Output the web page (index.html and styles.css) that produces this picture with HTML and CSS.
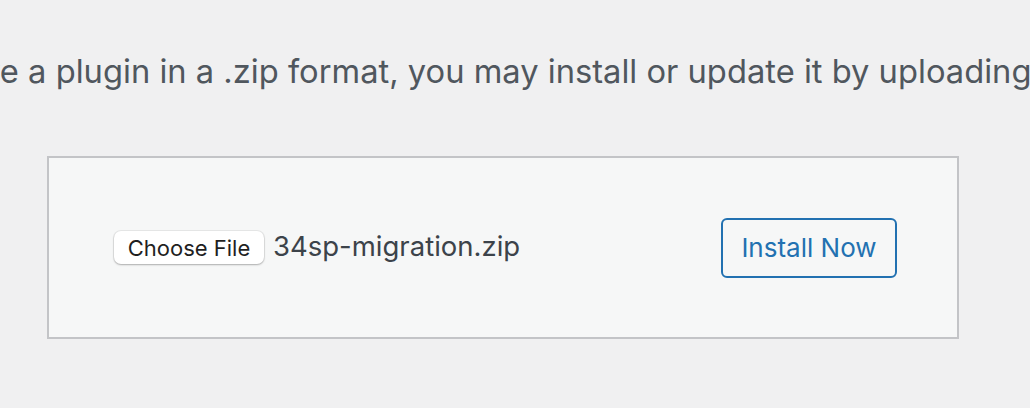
FILE: index.html
```html
<!DOCTYPE html>
<html lang="en">
<head>
<meta charset="utf-8">
<title>Upload Plugin</title>
<link rel="stylesheet" href="styles.css">
</head>
<body>
<div class="upload-plugin">
  <p class="install-help">If you have a plugin in a .zip format, you may install or update it by uploading it here.</p>
  <form class="upload-form">
    <div class="file-field">
      <span class="file-button">Choose File</span>
      <span class="file-name">34sp-migration.zip</span>
    </div>
    <span class="install-button">Install Now</span>
  </form>
</div>
</body>
</html>
```
FILE: styles.css
```css
html, body {
  margin: 0;
  padding: 0;
  background: #f0f0f1;
  overflow: hidden;
}
body {
  width: 1030px;
  height: 408px;
  font-family: Inter, "Noto Sans", "Liberation Sans", sans-serif;
}
.upload-plugin {
  display: flex;
  flex-direction: column;
  overflow: hidden;
}
.install-help {
  margin: 0 0 0 -151px;
  padding-top: 51px;
  height: 156px;
  box-sizing: border-box;
  white-space: nowrap;
  font-size: 32.7px;
  line-height: 40px;
  color: #50575e;
}
.upload-form {
  margin: 0 0 0 47px;
  width: 912px;
  height: 183px;
  box-sizing: border-box;
  border: 2px solid #c3c4c7;
  background: #f6f7f7;
  display: flex;
  align-items: center;
  justify-content: space-between;
  padding: 0 60px 0 65px;
}
.file-field {
  display: flex;
  align-items: center;
  gap: 9px;
}
.file-button {
  display: inline-flex;
  align-items: center;
  justify-content: center;
  width: 150px;
  height: 33px;
  box-sizing: border-box;
  background: #ffffff;
  border-radius: 7px;
  box-shadow: 0 0 0 1px rgba(0,0,0,0.06), 0 1px 2px rgba(0,0,0,0.25);
  font-size: 22px;
  color: #1f1f1f;
}
.file-name {
  font-size: 27.5px;
  color: #3c434a;
  position: relative;
  top: -2px;
}
.install-button {
  display: inline-flex;
  align-items: center;
  justify-content: center;
  width: 176px;
  height: 60px;
  box-sizing: border-box;
  border: 2px solid #2271b1;
  border-radius: 6px;
  background: #f6f7f7;
  color: #2271b1;
  font-size: 26px;
}
```
